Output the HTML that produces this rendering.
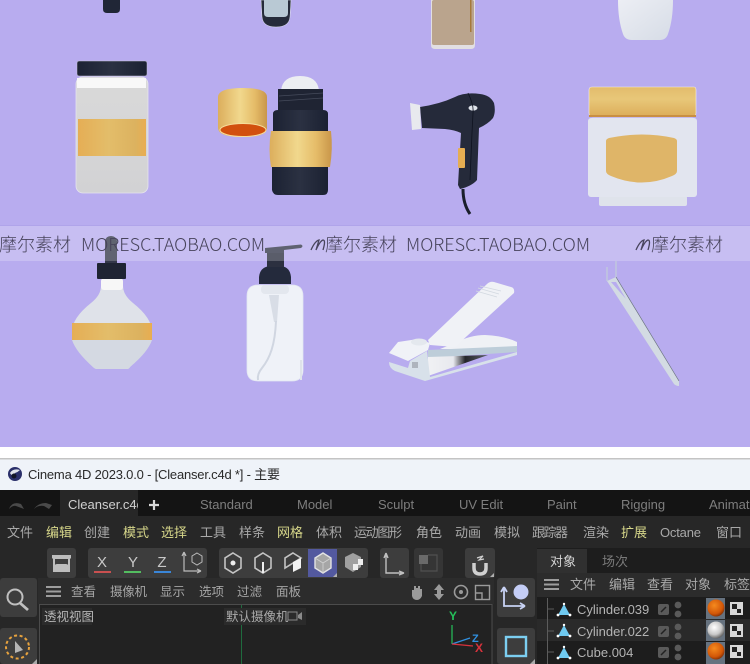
<!DOCTYPE html>
<html><head><meta charset="utf-8"><style>
html,body{margin:0;padding:0;background:#fff}
svg{display:block;filter:blur(.3px)}
text{font-family:"Liberation Sans","Noto Sans CJK SC",sans-serif}
.m{font-size:13px;fill:#a9a9a9}
.y{font-size:13px;fill:#d6d68a}
.t{font-size:13px;fill:#7e7e7e}
.v{font-size:12.5px;fill:#a5a5a5}
.o{font-size:13px;fill:#b4b4b4}
.w{font-family:"Noto Sans CJK SC","Liberation Sans",sans-serif;font-weight:300;font-size:18px;fill:#48445c}
</style></head><body>
<svg width="750" height="664" viewBox="0 0 750 664" xmlns="http://www.w3.org/2000/svg">
<defs>
<clipPath id="tabclip"><rect x="60" y="490" width="78" height="26"/></clipPath>
<linearGradient id="gold" x1="0" x2="1" y1="0" y2="0"><stop offset="0" stop-color="#e5ae55"/><stop offset=".45" stop-color="#e3bd6a"/><stop offset=".85" stop-color="#dcb25f"/><stop offset="1" stop-color="#e9ad50"/></linearGradient>
<linearGradient id="goldv" x1="0" x2="0" y1="0" y2="1"><stop offset="0" stop-color="#e3bc6c"/><stop offset=".4" stop-color="#e8c779"/><stop offset="1" stop-color="#dcac58"/></linearGradient>
<linearGradient id="cap" x1="0" x2="1" y1="0" y2="0"><stop offset="0" stop-color="#dcae5c"/><stop offset=".45" stop-color="#f1d88d"/><stop offset=".75" stop-color="#e5bc68"/><stop offset="1" stop-color="#c9964a"/></linearGradient>
<linearGradient id="navy" x1="0" x2="1" y1="0" y2="0"><stop offset="0" stop-color="#1c2233"/><stop offset=".5" stop-color="#2b3142"/><stop offset="1" stop-color="#1b2132"/></linearGradient>
<linearGradient id="glass" x1="0" x2="0" y1="0" y2="1"><stop offset="0" stop-color="#d9d9d9"/><stop offset="1" stop-color="#d2d2d4"/></linearGradient>
<linearGradient id="white" x1="0" x2="1" y1="0" y2="1"><stop offset="0" stop-color="#eceef4"/><stop offset="1" stop-color="#d6dce6"/></linearGradient>
<linearGradient id="metal" x1="0" x2="1" y1="0" y2="0"><stop offset="0" stop-color="#f0f1f4"/><stop offset=".42" stop-color="#e8e9ee"/><stop offset=".62" stop-color="#25262b"/><stop offset="1" stop-color="#5b5f66"/></linearGradient>
<radialGradient id="orange" cx=".4" cy=".35" r=".7"><stop offset="0" stop-color="#f58a1e"/><stop offset=".7" stop-color="#d25708"/><stop offset="1" stop-color="#7d2c04"/></radialGradient>
<radialGradient id="silver" cx=".4" cy=".35" r=".7"><stop offset="0" stop-color="#fff"/><stop offset=".6" stop-color="#c8c8c8"/><stop offset="1" stop-color="#555"/></radialGradient>
</defs>

<!-- purple background -->
<rect width="750" height="447" fill="#b8acef"/>

<!-- top row, cropped products -->
<path d="M103 0H120V9Q120 13 116 13H107Q103 13 103 9Z" fill="#202636"/>
<path d="M261 0H291L290 17Q289 27 276 27Q263 27 262 17Z" fill="#262b3a" stroke="#e6e9f3" stroke-width=".5"/>
<path d="M264 0H288V13Q288 17 284 17H268Q264 17 264 13Z" fill="#b9c9d4"/>
<path d="M431 0H475V45Q475 49 471 49H435Q431 49 431 45Z" fill="#e2dfe2"/>
<rect x="432" y="0" width="42" height="45" rx="2" fill="#baa48d"/>
<rect x="470" y="0" width="1.500" height="32" fill="#a5793a"/>
<path d="M618 0H673Q673 20 668 34Q666 40 660 40H632Q625 40 623 34Q618 20 618 0Z" fill="url(#white)"/>

<!-- jar 1 -->
<rect x="76" y="77" width="72" height="116" rx="7" fill="url(#glass)" stroke="#e5e4ee" stroke-width=".8"/>
<rect x="77" y="78" width="69" height="10" fill="#f8f8f8"/>
<rect x="78" y="119" width="68" height="37" fill="url(#gold)"/>
<rect x="77" y="61" width="70" height="15" rx="2" fill="url(#navy)" stroke="#c9c6da" stroke-width=".5"/>

<!-- roll-on -->
<path d="M218 97Q218 88 243 88Q267 88 267 97V128Q267 137 243 137Q218 137 218 128Z" fill="url(#cap)"/>
<ellipse cx="243" cy="130" rx="23" ry="6.500" fill="#d2500e" stroke="#f6dc9b" stroke-width="1"/>
<path d="M281 90Q283 76 300 76Q317 76 319 90Z" fill="#eceef2"/>
<path d="M278 89H323V111H278Z" fill="#1f2433"/>
<path d="M279 96L323 93M279 101L323 98" stroke="#454b5b" stroke-width=".8"/>
<path d="M273 114Q273 110 278 110H323Q328 110 328 114V131H273Z" fill="url(#navy)"/>
<path d="M271 131H331Q333 149 330 167H271Q268 149 271 131Z" fill="url(#cap)"/>
<path d="M272 167H328V190Q328 195 323 195H278Q273 195 272 190Z" fill="url(#navy)"/>

<!-- hair dryer -->
<path d="M420 107Q440 104 455 97Q465 92 480 94Q490 95 494 103Q496 112 493 118Q488 124 479 128L477 180Q472 186 460 189L458 185L461 133Q455 130 445 129L422 128Z" fill="#252a3a"/>
<path d="M410 103L420 105L421 129L412 130Z" fill="#e8e9ee"/>
<ellipse cx="473" cy="108" rx="4.500" ry="2.600" fill="#dfe3ea"/>
<path d="M468 93Q474 105 473 113L472 133L470 180" stroke="#0f1320" stroke-width=".8" fill="none"/>
<rect x="458" y="148" width="7" height="20" rx="1" fill="#e5ad52"/>
<path d="M463 189Q463 204 470 214" stroke="#1a1e2b" stroke-width="3" fill="none"/>

<!-- cream jar -->
<rect x="599" y="196" width="88" height="10" rx="2" fill="#dfe3eb"/>
<rect x="588" y="118" width="109" height="79" rx="3" fill="#e2e5ef"/>
<path d="M589 90Q589 87 592 87H694Q696 87 696 90V113Q696 117 692 117H593Q589 117 589 113Z" fill="url(#goldv)" stroke="#f3eee8" stroke-width=".6"/>
<rect x="589" y="115" width="107" height="2" fill="#c98f42"/>
<path d="M606 141Q606 139 609 138Q642 131 674 138Q677 139 677 141V171Q677 174 672 176Q642 189 611 176Q606 174 606 171Z" fill="#dfb568"/>

<!-- dropper -->
<path d="M101 286H123Q123 295 133 303Q152 318 152 332Q150 348 130 367Q129 369 127 369H97Q95 369 93 367Q73 348 72 332Q72 318 91 303Q101 295 101 286Z" fill="#dfe2e9"/>
<path d="M72 340H152Q148 352 130 367Q129 369 127 369H97Q95 369 93 367Q76 352 72 340Z" fill="#d4d9e2"/>
<rect x="101" y="278" width="22" height="12" rx="3" fill="#f7f7f7"/>
<rect x="72" y="323" width="80" height="17" fill="url(#gold)"/>
<rect x="97" y="263" width="29" height="16" rx="1" fill="#1f2433"/>
<path d="M105 263L105 241Q106 236 111 236Q116 236 117 241L117 263Z" fill="#34384a"/>

<!-- pump bottle -->
<path d="M247 370V296Q247 285 258 285H292Q303 285 303 296V370Q303 381 292 381H258Q247 381 247 370Z" fill="#eff2f8" stroke="#e2e6f1" stroke-width=".8"/>
<rect x="261" y="285" width="28" height="9" rx="4" fill="#e3e7ee"/>
<path d="M269 295H279L277 322H274Z" fill="#d8dde6"/>
<path d="M276 321C275 345 270 358 262 368Q257 374 258 380" stroke="#d0d6e1" stroke-width="2" fill="none"/>
<rect x="300" y="360" width="2" height="20" fill="#dfe3ea"/>
<path d="M259 284V277Q260 267 270 266H281Q290 267 291 277V284Z" fill="#242a3c"/>
<rect x="267" y="249" width="17" height="18" fill="#2c3040"/>
<path d="M265 248L301 244.500Q304 246 301 248L284 250L284 253H265Z" fill="#33374a"/>

<!-- band over products -->
<rect y="226" width="750" height="35" fill="#fff" opacity=".22"/>
<rect y="225" width="750" height="1" fill="#b0a4ea"/>
<text class="w" x="-1" y="251">摩尔素材</text>
<text class="w" x="81" y="251" textLength="184">MORESC.TAOBAO.COM</text>
<text class="w" x="325" y="251">摩尔素材</text>
<text class="w" x="406" y="251" textLength="184">MORESC.TAOBAO.COM</text>
<text class="w" x="651" y="251">摩尔素材</text>
<path d="M311 250Q315 241 319 240L316 250Q320 241 323 240Q326 240 323 250" stroke="#48445c" stroke-width="1.300" fill="none"/>
<path d="M636 250Q640 241 644 240L641 250Q645 241 648 240Q651 240 648 250" stroke="#48445c" stroke-width="1.300" fill="none"/>

<!-- clipper -->
<path d="M440 349L455 343Q470 335 485 335Q505 336 517 342V349Z" fill="#eff1f5"/>
<path d="M428 340L487 284Q490 281 494 282L511 287Q515 288 514 293L455 347L430 345Z" fill="#f0f2f6"/>
<path d="M476 291L497 297M478 288L499 294M480 286L501 291" stroke="#d2d8e0" stroke-width=".8"/>
<path d="M389 353L398 342L418 339L430 343L428 350L408 361Z" fill="#f0f2f7"/>
<ellipse cx="419" cy="342" rx="8" ry="3.500" fill="#e4e8ee"/>
<path d="M428 350L517 346V352L428 358Z" fill="#bdcdd9"/>
<path d="M428 357L488 355L428 376Z" fill="url(#metal)"/>
<path d="M389 362L408 368L410 361L427 351L430 377L517 352V355L425 381L395 371Q389 368 389 362Z" fill="#d8e1ea"/>
<path d="M412 362H418V368H412Z" fill="#aeb4bd"/>

<!-- tweezers -->
<path d="M607 267V281M616 261V277" stroke="#c3ced9" stroke-width="1.200"/>
<path d="M607 281L616 277L679 381L679 386Q676 386 674 384Z" fill="#d3dbe3"/>
<path d="M611 282L616 282L626 299Z" fill="#b8acef"/>
<path d="M616 277L679 381" stroke="#6d7682" stroke-width=".7" fill="none"/>

<!-- app window -->
<rect y="447" width="750" height="12" fill="#fff"/>
<rect y="458" width="750" height="1.500" fill="#c4c4c4"/>
<rect y="459.500" width="750" height="31" fill="#eff3f9"/>
<circle cx="15" cy="474" r="7" fill="#2a2f6a"/>
<path d="M10 473Q13 468 20 470Q18 472 15 473Q12 477 10 473Z" fill="#dfe2ea"/>
<circle cx="14" cy="476" r="2.500" fill="#121526"/>
<text x="28" y="479" font-size="13" fill="#2a2a2a" textLength="252">Cinema 4D 2023.0.0 - [Cleanser.c4d *] - 主要</text>

<rect y="490" width="750" height="174" fill="#272727"/>
<rect y="490" width="750" height="26" fill="#141414"/>
<rect x="60" y="490" width="78" height="26" fill="#272727"/>
<path d="M9 509Q12 501 21 504L24 509L16 506Q13 505 9 509ZM34 509Q38 503 46 503L52 505L49 509L44 506Q38 505 34 509Z" fill="#4a4a4a"/>
<text x="68" y="509" font-size="13" fill="#d0d0d0" clip-path="url(#tabclip)">Cleanser.c4d</text>
<path d="M149 505H159M154 500V510" stroke="#d8d8d8" stroke-width="2.200"/>
<text class="t" x="200" y="509">Standard</text>
<text class="t" x="297" y="509">Model</text>
<text class="t" x="378" y="509">Sculpt</text>
<text class="t" x="459" y="509">UV Edit</text>
<text class="t" x="547" y="509">Paint</text>
<text class="t" x="621" y="509">Rigging</text>
<text class="t" x="709" y="509">Animat</text>

<text class="m" x="7" y="537">文件</text>
<text class="y" x="46" y="537">编辑</text>
<text class="m" x="84" y="537">创建</text>
<text class="y" x="123" y="537">模式</text>
<text class="y" x="161" y="537">选择</text>
<text class="m" x="200" y="537">工具</text>
<text class="m" x="239" y="537">样条</text>
<text class="y" x="277" y="537">网格</text>
<text class="m" x="316" y="537">体积</text>
<text class="m" x="354" y="537" textLength="48">运动图形</text>
<text class="m" x="416" y="537">角色</text>
<text class="m" x="455" y="537">动画</text>
<text class="m" x="494" y="537">模拟</text>
<text class="m" x="532" y="537" textLength="36">跟踪器</text>
<text class="m" x="583" y="537">渲染</text>
<text class="y" x="621" y="537">扩展</text>
<text class="m" x="660" y="537" textLength="41">Octane</text>
<text class="m" x="716" y="537">窗口</text>

<!-- toolbar -->
<g fill="#3d3d3d">
<rect x="47" y="548" width="29" height="30" rx="3"/>
<rect x="88" y="548" width="119" height="30" rx="3"/>
<rect x="219" y="548" width="149" height="30" rx="3"/>
<rect x="380" y="548" width="29" height="30" rx="3"/>
<rect x="414" y="548" width="29" height="30" rx="3" fill="#353535"/>
<rect x="465" y="548" width="30" height="30" rx="3"/>
<rect x="0" y="578" width="37" height="39" rx="3"/>
<rect x="0" y="628" width="37" height="36" rx="3"/>
<rect x="497" y="578" width="38" height="39" rx="3"/>
<rect x="497" y="628" width="38" height="36" rx="3"/>
</g>
<path d="M54 558V571H69V558Z" fill="none" stroke="#bdbdbd" stroke-width="2"/>
<rect x="52" y="555" width="19" height="3.500" fill="#bdbdbd"/>
<rect x="54" y="564" width="15" height="7" rx="3" fill="#bdbdbd"/>
<text x="102" y="567" font-size="15" fill="#c8c8c8" text-anchor="middle">X</text>
<text x="133" y="567" font-size="15" fill="#c8c8c8" text-anchor="middle">Y</text>
<text x="162" y="567" font-size="15" fill="#c8c8c8" text-anchor="middle">Z</text>
<rect x="94" y="571" width="17" height="2" fill="#c95050"/>
<rect x="124" y="571" width="17" height="2" fill="#53bd60"/>
<rect x="154" y="571" width="17" height="2" fill="#3a86d8"/>
<path d="M184 552V571H201M184 552L182 556M184 552L186 556M201 571L197 569M201 571L197 573" stroke="#bcbcbc" stroke-width="1.200" fill="none"/>
<path d="M197 553L202 556V562L197 565L192 562V556Z" stroke="#bcbcbc" stroke-width="1" fill="none"/>
<path d="M233 553L241 558V568L233 573L225 568V558Z" fill="none" stroke="#c4c4c4" stroke-width="1.600"/>
<circle cx="233" cy="563" r="2.500" fill="#eee"/>
<path d="M263 553L271 558V568L263 573L255 568V558Z" fill="none" stroke="#c4c4c4" stroke-width="1.600"/>
<rect x="262" y="562" width="2" height="11" fill="#eee"/>
<path d="M293 553L301 558L285 568V558Z" fill="none" stroke="#c4c4c4" stroke-width="1.600"/>
<path d="M293 562L301 558V568L293 572Z" fill="#f2f2f2"/>
<rect x="308" y="549" width="29" height="28" fill="#53599f"/>
<path d="M323 553L331 558V568L323 573L315 568V558Z" fill="#a6a6a6" stroke="#e4e4e4" stroke-width="1.400"/>
<path d="M323 563V573M323 563L331 558M323 563L315 558" stroke="#d2d2d2" stroke-width=".8"/>
<path d="M333 577H337V573Z" fill="#b0b0b0"/>
<path d="M353 553L361 557V567L353 572L345 567V557Z" fill="#a0a0a0"/>
<path d="M353 564H358V570H353ZM358 559H363V565H358Z" fill="#eee"/>
<path d="M386 553V573H404M386 553L384 558M386 553L388 558M404 573L399 571M404 573L399 575" stroke="#c0c0c0" stroke-width="1.400" fill="none"/>
<rect x="419" y="555" width="9" height="9" fill="#6a6a6a"/>
<path d="M428 555H437V571H421V564" fill="none" stroke="#505050" stroke-width="1.200"/>
<path d="M474 563V568Q474 574 480 574Q486 574 486 568V563" stroke="#d0d0d0" stroke-width="3.500" fill="none"/>
<path d="M477 558L483 556L479 560L484 559" stroke="#d0d0d0" stroke-width="1.200" fill="none"/>
<path d="M490 577H494V573Z" fill="#b0b0b0"/>

<!-- left icons -->
<circle cx="15" cy="597" r="7.500" fill="none" stroke="#bfbfbf" stroke-width="2"/>
<path d="M20 603L28 610" stroke="#bfbfbf" stroke-width="2.800"/>
<circle cx="17.500" cy="647" r="11.500" fill="none" stroke="#e8a33e" stroke-width="2" stroke-dasharray="3 2.600"/>
<path d="M15 641L23 650L15 653Z" fill="#b5b5b5"/>
<path d="M32 664H37V659Z" fill="#aaa"/>

<!-- viewport -->
<rect x="38" y="578" width="456" height="26" fill="#2c2c2c"/>
<rect x="39.500" y="604.500" width="452.500" height="60" fill="#222" stroke="#4c4c4c" stroke-width="1"/>
<path d="M46 587H61M46 591.500H61M46 596H61" stroke="#9d9d9d" stroke-width="2"/>
<text class="v" x="71" y="596">查看</text>
<text class="v" x="110" y="596" textLength="37">摄像机</text>
<text class="v" x="160" y="596">显示</text>
<text class="v" x="199" y="596">选项</text>
<text class="v" x="237" y="596">过滤</text>
<text class="v" x="276" y="596">面板</text>
<path d="M412 596V590H414V586H416V588H418V586H420V589H422V596Q420 600 417 600Q413 600 412 596Z" fill="#9a9a9a"/>
<path d="M439 584L444 590H441V594H444L439 600L434 594H437V590H434Z" fill="#9a9a9a"/>
<circle cx="461" cy="592" r="6.500" fill="none" stroke="#9a9a9a" stroke-width="1.600"/>
<circle cx="461" cy="592" r="2" fill="#9a9a9a"/>
<rect x="475.500" y="585.500" width="14" height="14" fill="none" stroke="#9a9a9a" stroke-width="1.400"/>
<path d="M475 593H482V600" fill="none" stroke="#9a9a9a" stroke-width="1.400"/>
<rect x="241" y="605" width="1" height="59" fill="#1f6b3e"/>
<rect x="42" y="608" width="50" height="17" fill="#2b2b2b"/>
<text x="44" y="621" font-size="12.500" fill="#b5b5b5">透视视图</text>
<rect x="224" y="608" width="82" height="17" fill="#2b2b2b"/>
<text x="226" y="621" font-size="12.500" fill="#aaa">默认摄像机</text>
<rect x="288" y="612" width="9" height="8" fill="none" stroke="#8a8a8a"/>
<path d="M298 615L302 612V620L298 618Z" fill="#8a8a8a"/>
<text x="449" y="620" font-size="12" font-weight="bold" fill="#25c05a">Y</text>
<text x="472" y="642" font-size="11" font-weight="bold" fill="#3090e0">Z</text>
<text x="475" y="652" font-size="12" font-weight="bold" fill="#d8323c">X</text>
<path d="M452 625V644" stroke="#25c05a" stroke-width="1.200"/>
<path d="M452 644L470 638" stroke="#3090e0" stroke-width="1.200"/>
<path d="M452 644L473 646" stroke="#d8323c" stroke-width="1.200"/>

<!-- right tool icons -->
<path d="M504 587V606H525M504 587L501 592M504 587L507 592M525 606L520 603M525 606L520 609" stroke="#c8d2f4" stroke-width="1.800" fill="none"/>
<circle cx="521" cy="592" r="7.500" fill="#c4cdf6"/>
<rect x="506" y="637" width="20" height="19" fill="none" stroke="#7ccff2" stroke-width="2.400"/>
<path d="M530 664H535V659Z" fill="#aaa"/>

<!-- objects panel -->
<rect x="537" y="548" width="213" height="116" fill="#1d1d1d"/>
<rect x="537" y="549" width="50" height="24" fill="#303030"/>
<rect x="537" y="573" width="213" height="24" fill="#2c2c2c"/>
<text x="550" y="566" font-size="13" fill="#d4d4d4">对象</text>
<text x="602" y="566" font-size="13" fill="#7a7a7a">场次</text>
<path d="M544 580H559M544 584.500H559M544 589H559" stroke="#9d9d9d" stroke-width="2"/>
<text class="m" x="570" y="589">文件</text>
<text class="m" x="609" y="589">编辑</text>
<text class="m" x="647" y="589">查看</text>
<text class="m" x="685" y="589">对象</text>
<text class="m" x="724" y="589">标签</text>
<rect x="537" y="619" width="213" height="22" fill="#2a2a2a"/>
<path d="M547.500 598V664M547 609H554M547 631H554M547 652H554" stroke="#5c5c5c" stroke-width="1"/>
<path d="M564 604L570 615H558Z" fill="#6fc9f0"/><circle cx="564" cy="604" r="1.200" fill="#fff"/><circle cx="558" cy="615" r="1.400" fill="#fff"/><circle cx="570" cy="615" r="1.400" fill="#fff"/>
<path d="M564 625L570 636H558Z" fill="#6fc9f0"/><circle cx="564" cy="625" r="1.200" fill="#fff"/><circle cx="558" cy="636" r="1.400" fill="#fff"/><circle cx="570" cy="636" r="1.400" fill="#fff"/>
<path d="M564 647L570 658H558Z" fill="#6fc9f0"/><circle cx="564" cy="647" r="1.200" fill="#fff"/><circle cx="558" cy="658" r="1.400" fill="#fff"/><circle cx="570" cy="658" r="1.400" fill="#fff"/>
<text class="o" x="577" y="614">Cylinder.039</text>
<text class="o" x="577" y="636">Cylinder.022</text>
<text class="o" x="577" y="657">Cube.004</text>
<g fill="#5a5a5a">
<rect x="658" y="604" width="11" height="11" rx="2"/><rect x="658" y="626" width="11" height="11" rx="2"/><rect x="658" y="647" width="11" height="11" rx="2"/>
<circle cx="678" cy="605" r="3.400"/><circle cx="678" cy="614" r="3.400"/><circle cx="678" cy="627" r="3.400"/><circle cx="678" cy="636" r="3.400"/><circle cx="678" cy="648" r="3.400"/><circle cx="678" cy="657" r="3.400"/>
</g>
<path d="M661 612L666 607M661 634L666 629M661 655L666 650" stroke="#222" stroke-width="1.500"/>
<rect x="706" y="598" width="19" height="21" fill="#66727f"/><circle cx="716" cy="608" r="8.500" fill="url(#orange)"/>
<rect x="706" y="620" width="19" height="21" fill="#66727f"/><circle cx="716" cy="630" r="8.500" fill="url(#silver)"/>
<rect x="706" y="642" width="19" height="20" fill="#66727f"/><circle cx="716" cy="651" r="8.500" fill="url(#orange)"/>
<rect x="706" y="662" width="19" height="2" fill="#66727f"/>
<rect x="730" y="602" width="13" height="13" fill="#d8d8d8"/><rect x="732" y="604" width="5" height="5" fill="#222"/><rect x="737" y="609" width="4" height="4" fill="#222"/>
<rect x="730" y="624" width="13" height="13" fill="#d8d8d8"/><rect x="732" y="626" width="5" height="5" fill="#222"/><rect x="737" y="631" width="4" height="4" fill="#222"/>
<rect x="730" y="645" width="13" height="13" fill="#d8d8d8"/><rect x="732" y="647" width="5" height="5" fill="#222"/><rect x="737" y="652" width="4" height="4" fill="#222"/>
</svg>
</body></html>
